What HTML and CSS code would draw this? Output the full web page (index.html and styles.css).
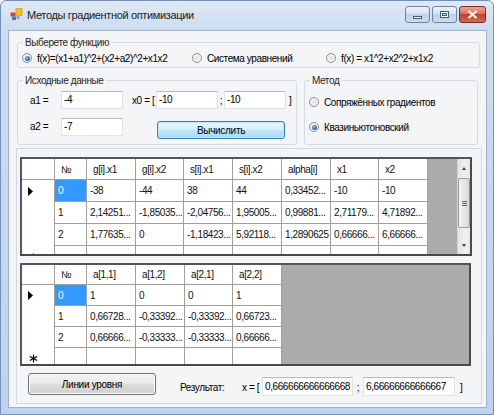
FILE: index.html
```html
<!DOCTYPE html>
<html lang="ru">
<head>
    <meta charset="UTF-8">
    <title>Методы градиентной оптимизации</title>
    <link rel="stylesheet" href="styles.css">
</head>
<body>
<div class="window">
    <div class="titlebar">
        <svg class="app-icon" width="13" height="13" viewBox="0 0 13 13">
            <rect x="6" y="0.5" width="6" height="7" fill="#f2c21b" stroke="#c99a10" stroke-width="0.6"/>
            <rect x="0.5" y="4.5" width="5" height="4" fill="#e2412a"/>
            <rect x="2" y="8.5" width="4" height="3.5" fill="#3a7ad6"/>
            <rect x="6.5" y="8" width="3" height="3" fill="#9aa6b4"/>
        </svg>
        <span class="title">Методы градиентной оптимизации</span>
        <div class="caption-buttons">
            <span class="cap cap-min"><i></i></span>
            <span class="cap cap-max"><i></i></span>
            <span class="cap cap-close">
                <svg width="11" height="9" viewBox="0 0 11 9"><path d="M1.5 1 L9.5 8 M9.5 1 L1.5 8" stroke="#fff" stroke-width="2.2"/></svg>
            </span>
        </div>
    </div>

    <div class="client">
        <div class="group group-func">
            <span class="group-caption">Выберете функцию</span>
            <div class="func-row">
                <label class="radio radio-1"><span class="rb on"></span>f(x)=(x1+a1)^2+(x2+a2)^2+x1x2</label>
                <label class="radio radio-2"><span class="rb"></span>Система уравнений</label>
                <label class="radio"><span class="rb"></span>f(x) = x1^2+x2^2+x1x2</label>
            </div>
        </div>

        <div class="mid-row">
            <div class="group group-data">
                <span class="group-caption">Исходные данные</span>
                <div class="data-row">
                    <span class="lbl-a">a1 =</span>
                    <span class="textbox">-4</span>
                    <span class="lbl-x0">x0 = [</span>
                    <span class="textbox">-10</span>
                    <span class="lbl-sep">;</span>
                    <span class="textbox">-10</span>
                    <span class="lbl-close">]</span>
                </div>
                <div class="data-row second">
                    <span class="lbl-a">a2 =</span>
                    <span class="textbox">-7</span>
                    <button class="btn btn-default">Вычислить</button>
                </div>
            </div>

            <div class="group group-method">
                <span class="group-caption">Метод</span>
                <label class="radio method-item"><span class="rb"></span>Сопряжённых градиентов</label>
                <label class="radio method-item"><span class="rb on"></span>Квазиньютоновский</label>
            </div>
        </div>

        <div class="panel">
            <div class="dgv dgv-steps">
                <table class="dgv-table">
                    <colgroup>
                        <col style="width:33px"><col style="width:32px"><col style="width:49px">
                        <col style="width:48px"><col style="width:49px"><col style="width:49px">
                        <col style="width:49px"><col style="width:48px"><col style="width:49px">
                    </colgroup>
                    <tr class="hdr">
                        <th class="rh"></th><th>№</th><th>g[i].x1</th><th>g[i].x2</th><th>s[i].x1</th>
                        <th>s[i].x2</th><th>alpha[i]</th><th>x1</th><th>x2</th>
                    </tr>
                    <tr>
                        <td class="rh"><svg class="cur" width="5" height="9" viewBox="0 0 5 9"><path d="M0 0 L5 4.5 L0 9Z" fill="#000"/></svg></td>
                        <td class="sel">0</td><td>-38</td><td>-44</td><td>38</td><td>44</td><td>0,33452...</td><td>-10</td><td>-10</td>
                    </tr>
                    <tr>
                        <td class="rh"></td>
                        <td>1</td><td>2,14251...</td><td>-1,85035...</td><td>-2,04756...</td><td>1,95005...</td><td>0,99881...</td><td>2,71179...</td><td>4,71892...</td>
                    </tr>
                    <tr>
                        <td class="rh"></td>
                        <td>2</td><td>1,77635...</td><td>0</td><td>-1,18423...</td><td>5,92118...</td><td>1,2890625</td><td>0,66666...</td><td>6,66666...</td>
                    </tr>
                    <tr class="new">
                        <td class="rh"><svg class="star" width="9" height="9" viewBox="0 0 9 9"><path d="M4.5 0.5 V8.5 M0.8 2.5 L8.2 6.5 M8.2 2.5 L0.8 6.5" stroke="#000" stroke-width="1.2"/></svg></td>
                        <td></td><td></td><td></td><td></td><td></td><td></td><td></td><td></td>
                    </tr>
                </table>
                <div class="dgv-empty"></div>
                <div class="vscroll">
                    <span class="arrow up"></span>
                    <span class="thumb"><i></i></span>
                    <span class="arrow down"></span>
                </div>
            </div>

            <div class="dgv dgv-matrix">
                <table class="dgv-table">
                    <colgroup>
                        <col style="width:33px"><col style="width:32px"><col style="width:49px">
                        <col style="width:49px"><col style="width:48px"><col style="width:49px">
                    </colgroup>
                    <tr class="hdr">
                        <th class="rh"></th><th>№</th><th>a[1,1]</th><th>a[1,2]</th><th>a[2,1]</th><th>a[2,2]</th>
                    </tr>
                    <tr>
                        <td class="rh"><svg class="cur" width="5" height="9" viewBox="0 0 5 9"><path d="M0 0 L5 4.5 L0 9Z" fill="#000"/></svg></td>
                        <td class="sel">0</td><td>1</td><td>0</td><td>0</td><td>1</td>
                    </tr>
                    <tr>
                        <td class="rh"></td>
                        <td>1</td><td>0,66728...</td><td>-0,33392...</td><td>-0,33392...</td><td>0,66723...</td>
                    </tr>
                    <tr>
                        <td class="rh"></td>
                        <td>2</td><td>0,66666...</td><td>-0,33333...</td><td>-0,33333...</td><td>0,66666...</td>
                    </tr>
                    <tr class="new">
                        <td class="rh"><svg class="star" width="9" height="9" viewBox="0 0 9 9"><path d="M4.5 0.5 V8.5 M0.8 2.5 L8.2 6.5 M8.2 2.5 L0.8 6.5" stroke="#000" stroke-width="1.2"/></svg></td>
                        <td></td><td></td><td></td><td></td><td></td>
                    </tr>
                </table>
                <div class="dgv-empty"></div>
            </div>

            <div class="result-row">
                <button class="btn btn-levels">Линии уровня</button>
                <span class="res-label">Результат:</span>
                <span class="res-open">x = [</span>
                <span class="textbox res-box">0,666666666666668</span>
                <span class="res-sep">;</span>
                <span class="textbox res-box wide">6,66666666666667</span>
                <span class="res-close">]</span>
            </div>
        </div>
    </div>
</div>
</body>
</html>
```

FILE: styles.css
```css
* {
    box-sizing: border-box;
}
body {
    margin: 0;
    font-family: "Liberation Sans", Arial, sans-serif;
    font-size: 10px;
    letter-spacing: -0.4px;
    color: #000;
    background: #ffffff;
}
.window {
    width: 494px;
    height: 415px;
    display: flex;
    flex-direction: column;
    border: 1px solid #7390b6;
    border-radius: 6px 6px 0 0;
    background: linear-gradient(to bottom, #dfe9f6 0, #cddcf0 28px, #bfd3ec 100%);
}
.titlebar {
    height: 29px;
    display: flex;
    align-items: center;
    padding: 0 7px 2px 9px;
}
.app-icon {
    flex: none;
}
.title {
    margin-left: 4px;
    font-size: 11px;
    letter-spacing: -0.35px;
    color: #1a1a1a;
}
.caption-buttons {
    margin-left: auto;
    display: flex;
    gap: 2px;
}
.cap {
    height: 17px;
    width: 25px;
    border: 1px solid #6d86a8;
    border-radius: 3px;
    display: flex;
    align-items: center;
    justify-content: center;
    background: linear-gradient(to bottom, #eef3fa 0, #d5e2f1 45%, #bfd2e9 50%, #c9dcef 100%);
}
.cap-min i {
    width: 9px;
    height: 3px;
    margin-top: 5px;
    background: #fff;
    border: 1px solid #3d5a80;
}
.cap-max i {
    width: 9px;
    height: 7px;
    border: 1px solid #3d5a80;
    box-shadow: inset 0 0 0 1px #fff, inset 0 0 0 2px #3d5a80;
    background: #d8e3f0;
}
.cap-close {
    width: 27px;
    border-color: #7a2c20;
    background: linear-gradient(to bottom, #e8a795 0, #d9735d 45%, #c4402a 50%, #d06a4f 100%);
}

.client {
    flex: 1;
    margin: 0 6px 6px 7px;
    border: 1px solid #9fb2cb;
    background: #f4f5f7;
}

.group {
    position: relative;
    border: 1px solid #d5dbe1;
    border-radius: 3px;
}
.group-caption {
    position: absolute;
    top: -7px;
    left: 5px;
    padding: 0 2px;
    line-height: 13px;
    background: #f4f5f7;
    color: #1e1e1e;
    white-space: nowrap;
}
.group-func {
    margin: 11px 0 0 8px;
    width: 463px;
    height: 26px;
}
.func-row {
    display: flex;
    margin-top: 8px;
    padding-left: 4px;
}
.radio {
    display: inline-flex;
    align-items: center;
    gap: 5px;
    height: 14px;
    white-space: nowrap;
}
.radio-1 {
    width: 170px;
}
.radio-2 {
    width: 134px;
}
.rb {
    flex: none;
    width: 10px;
    height: 10px;
    border-radius: 50%;
    border: 1px solid #8e9094;
    background: radial-gradient(circle at 50% 50%, #dfe1e3 0, #f4f4f4 70%);
    display: flex;
    align-items: center;
    justify-content: center;
}
.rb.on::after {
    content: "";
    width: 5px;
    height: 5px;
    border-radius: 50%;
    background: radial-gradient(circle at 40% 35%, #8cc4ec 0, #2c6aa6 60%, #1d4f82 100%);
}

.mid-row {
    display: flex;
    margin-top: 12px;
}
.group-data {
    margin-left: 8px;
    width: 280px;
    height: 65px;
    padding-top: 10px;
}
.data-row {
    display: flex;
    align-items: center;
    height: 18px;
    padding-left: 12px;
    white-space: nowrap;
}
.data-row.second {
    margin-top: 9px;
    align-items: flex-start;
}
.data-row.second .lbl-a {
    line-height: 18px;
}
.lbl-a {
    flex: none;
    width: 31px;
}
.lbl-x0 {
    flex: none;
    width: 24px;
    margin-left: 9px;
}
.lbl-sep {
    flex: none;
    width: 6px;
    text-align: center;
}
.lbl-close {
    margin-left: 3px;
}
.textbox {
    flex: none;
    display: block;
    width: 62px;
    height: 18px;
    line-height: 16px;
    padding: 0 2px;
    background: #fff;
    border: 1px solid #dfe3e8;
    border-top-color: #b5b9c0;
    white-space: nowrap;
    overflow: hidden;
}
.btn {
    flex: none;
    font-family: inherit;
    font-size: 10px;
    letter-spacing: -0.3px;
    color: #000;
    border-radius: 3px;
    padding: 0;
}
.btn-default {
    margin: 3px 0 0 34px;
    width: 128px;
    height: 18px;
    border: 1px solid #3c7fb1;
    background: linear-gradient(to bottom, #eaf6fd 0, #d9f0fc 45%, #bee6fd 50%, #a7d9f5 100%);
    box-shadow: inset 0 0 0 1px #bfe4f7;
}

.group-method {
    margin-left: 7px;
    width: 174px;
    height: 65px;
    padding: 14px 0 0 4px;
}
.method-item {
    display: flex;
}
.method-item + .method-item {
    margin-top: 11px;
}

.panel {
    margin: 3px 0 0 7px;
    width: 466px;
    height: 256px;
    border: 1px solid #d2d8df;
    padding: 8px 0 0 3px;
}

.dgv {
    display: flex;
    width: 452px;
    height: 99px;
    overflow: hidden;
    background: #ababab;
    border: 2px solid #4a4a4a;
    border-left-color: #555;
    border-top-color: #555;
}
.dgv-matrix {
    width: 451px;
    height: 103px;
    margin-top: 7px;
}
.dgv-table {
    flex: none;
    align-self: flex-start;
    table-layout: fixed;
    border-collapse: separate;
    border-spacing: 0;
    background: #fff;
}
.dgv-table th,
.dgv-table td {
    padding: 0 0 0 3px;
    font-weight: normal;
    text-align: left;
    white-space: nowrap;
    overflow: hidden;
    border-right: 1px solid #a0a0a0;
    border-bottom: 1px solid #a0a0a0;
    color: #111;
}
.dgv-table th {
    padding-left: 6px;
}
.dgv-table tr {
    height: 22px;
}
.dgv-table tr.hdr {
    height: 21px;
}
.dgv-matrix .dgv-table tr {
    height: 21px;
}
.dgv-matrix .dgv-table tr.hdr {
    height: 20px;
}
.dgv-table .rh {
    border-bottom: none;
    padding-left: 6px;
}
.dgv-table tr.hdr .rh {
    border-bottom: 1px solid #a0a0a0;
}
.dgv-table td.sel {
    background: #3399ff;
    color: #fff;
}
.cur {
    display: block;
}
.star {
    display: block;
    margin-left: 1px;
}
.dgv-empty {
    flex: 1;
}
.vscroll {
    flex: none;
    width: 13px;
    position: relative;
    background: linear-gradient(to right, #e3e3e3, #f1f1f1 60%, #e8e8e8);
    border-left: 1px solid #d6d6d6;
}
.arrow {
    position: absolute;
    left: 4px;
    width: 0;
    height: 0;
    border-left: 2.5px solid transparent;
    border-right: 2.5px solid transparent;
}
.arrow.up {
    top: 8px;
    border-bottom: 3px solid #404040;
}
.arrow.down {
    bottom: 7px;
    border-top: 3px solid #404040;
}
.thumb {
    position: absolute;
    left: 0;
    top: 19px;
    width: 12px;
    height: 50px;
    border: 1px solid #9a9a9a;
    border-radius: 2px;
    background: linear-gradient(to right, #f3f3f3, #e6e6e6 50%, #d6d6d6);
    display: flex;
    align-items: center;
    justify-content: center;
}
.thumb i {
    width: 5px;
    height: 5px;
    background: repeating-linear-gradient(to bottom, #666 0, #666 1px, transparent 1px, transparent 2px);
}

.result-row {
    display: flex;
    align-items: flex-start;
    margin-top: 7px;
    white-space: nowrap;
}
.btn-levels {
    margin-left: 8px;
    width: 128px;
    height: 22px;
    border: 1px solid #707070;
    background: linear-gradient(to bottom, #f2f2f2 0, #ebebeb 45%, #dddddd 50%, #cfcfcf 100%);
    box-shadow: inset 0 0 0 1px #fcfcfc;
}
.res-label,
.res-open,
.res-sep,
.res-close {
    flex: none;
    margin-top: 8px;
    line-height: 13px;
}
.res-label {
    margin-left: 24px;
    width: 62px;
}
.res-open {
    width: 20px;
}
.res-box {
    margin-top: 4px;
    width: 91px;
    height: 19px;
    line-height: 17px;
}
.res-box.wide {
    width: 92px;
}
.res-sep {
    width: 10px;
    text-align: center;
}
.res-close {
    margin-left: 5px;
}
```
